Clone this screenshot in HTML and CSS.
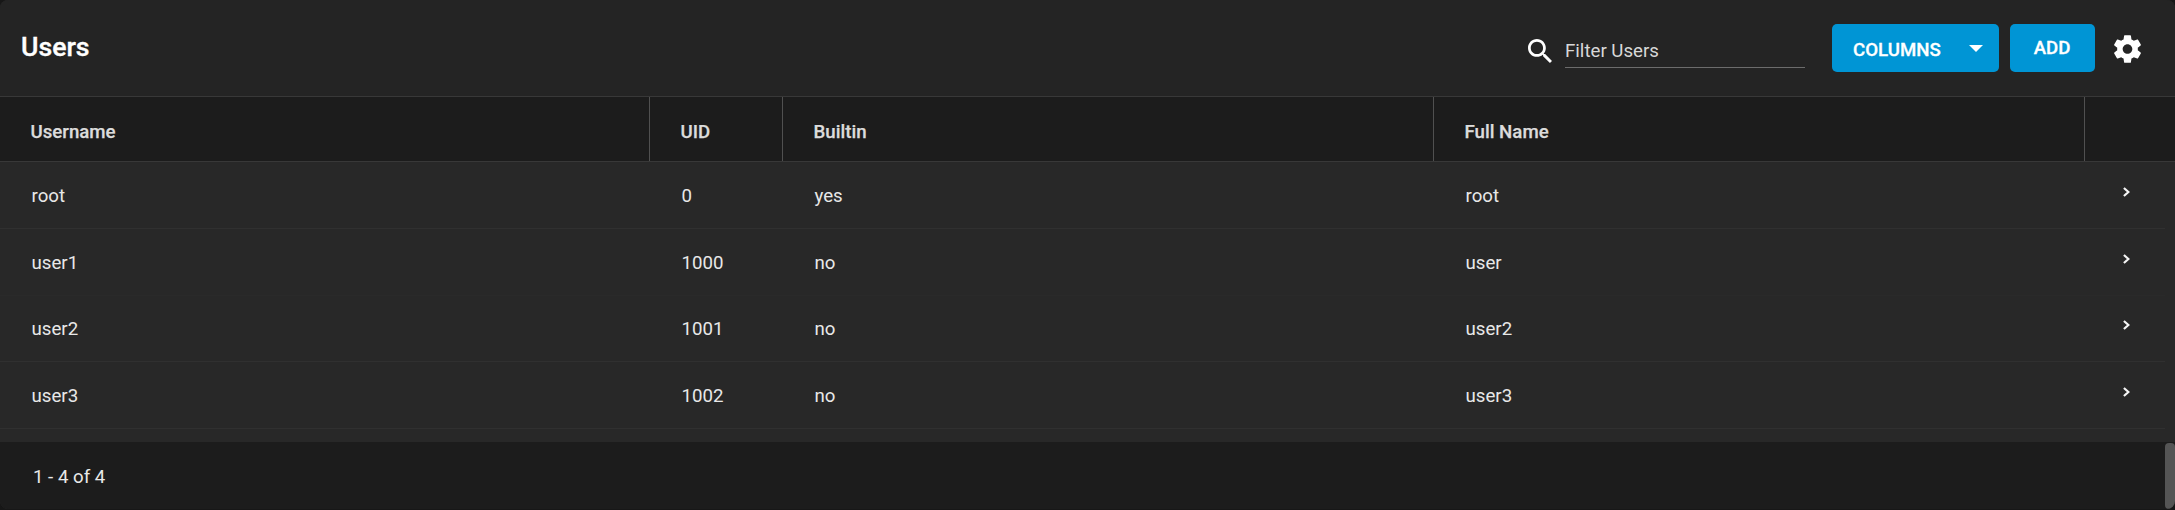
FILE: index.html
```html
<!DOCTYPE html>
<html lang="en">
<head>
<meta charset="utf-8">
<title>Users</title>
<link rel="stylesheet" href="styles.css">
</head>
<body>
<main class="card">
  <header class="toolbar">
    <h1 class="title">Users</h1>
    <div class="search">
      <svg class="search-icon" viewBox="3 3 17.5 17.5"><path d="M15.5 14h-.79l-.28-.27C15.41 12.59 16 11.11 16 9.5 16 5.91 13.09 3 9.5 3S3 5.91 3 9.5 5.91 16 9.5 16c1.61 0 3.09-.59 4.23-1.57l.27.28v.79l5 4.99L20.49 19l-4.99-5zm-6 0C7.01 14 5 11.99 5 9.5S7.01 5 9.5 5 14 7.01 14 9.5 11.99 14 9.5 14z"/></svg>
      <div class="field"><span>Filter Users</span></div>
    </div>
    <button class="btn btn-columns"><span>COLUMNS</span><svg class="caret" viewBox="0 0 14 7"><path d="M0 0h14L7 7z"/></svg></button>
    <button class="btn btn-add"><span>ADD</span></button>
    <svg class="gear" viewBox="2.2 2 19.6 20"><path d="M19.43 12.98c.04-.32.07-.64.07-.98s-.03-.66-.07-.98l2.11-1.65c.19-.15.24-.42.12-.64l-2-3.46c-.12-.22-.39-.3-.61-.22l-2.49 1c-.52-.4-1.08-.73-1.69-.98l-.38-2.65C14.46 2.18 14.25 2 14 2h-4c-.25 0-.46.18-.49.42l-.38 2.65c-.61.25-1.17.59-1.69.98l-2.49-1c-.23-.09-.49 0-.61.22l-2 3.46c-.13.22-.07.49.12.64l2.11 1.65c-.04.32-.07.65-.07.98s.03.66.07.98l-2.11 1.65c-.19.15-.24.42-.12.64l2 3.46c.12.22.39.3.61.22l2.49-1c.52.4 1.08.73 1.69.98l.38 2.65c.03.24.24.42.49.42h4c.25 0 .46-.18.49-.42l.38-2.65c.61-.25 1.17-.59 1.69-.98l2.49 1c.23.09.49 0 .61-.22l2-3.46c.12-.22.07-.49-.12-.64l-2.11-1.65zM12 15.5c-1.93 0-3.5-1.57-3.5-3.5s1.57-3.5 3.5-3.5 3.5 1.57 3.5 3.5-1.57 3.5-3.5 3.5z"/></svg>
  </header>
  <div class="grid head">
    <div>Username</div><div>UID</div><div>Builtin</div><div>Full Name</div><div></div>
  </div>
  <div class="body">
    <div class="grid row"><div>root</div><div>0</div><div>yes</div><div>root</div><div><svg class="chevron" viewBox="0 0 7 10"><path d="M.9 1L5.4 5 .9 9"/></svg></div></div>
    <div class="grid row faint"><div>user1</div><div>1000</div><div>no</div><div>user</div><div><svg class="chevron" viewBox="0 0 7 10"><path d="M.9 1L5.4 5 .9 9"/></svg></div></div>
    <div class="grid row short"><div>user2</div><div>1001</div><div>no</div><div>user2</div><div><svg class="chevron" viewBox="0 0 7 10"><path d="M.9 1L5.4 5 .9 9"/></svg></div></div>
    <div class="grid row"><div>user3</div><div>1002</div><div>no</div><div>user3</div><div><svg class="chevron" viewBox="0 0 7 10"><path d="M.9 1L5.4 5 .9 9"/></svg></div></div>
  </div>
  <footer class="footer"><span>1 - 4 of 4</span><div class="thumb"></div></footer>
</main>
</body>
</html>
```
FILE: styles.css
```css
* { box-sizing: border-box; }
body {
  margin: 0;
  height: 510px;
  overflow: hidden;
  background: #171717;
  color: #e8e8e8;
  font: 18.667px/24px Roboto, sans-serif;
}
.card {
  height: 509px;
  background: #282828;
  border-radius: 8px;
  overflow: hidden;
}
.toolbar {
  display: flex;
  align-items: flex-start;
  height: 97px;
  padding: 24px 34px 0 21px;
  background: #242424;
  border-bottom: 1px solid #383838;
}
.title {
  flex: 1;
  margin: 6px 0 0;
  color: #fff;
  font-size: 26.667px;
  line-height: 34px;
  font-weight: 500;
  -webkit-text-stroke: 0.35px currentColor;
}
.search { display: flex; margin-right: 27px; }
.search-icon { width: 24px; height: 24px; margin: 15px 13px 0 0; fill: #fff; }
.field {
  width: 240px;
  height: 44px;
  padding-top: 15px;
  border-bottom: 1px solid #6c6c6c;
  color: #d8d8d8;
}
.btn {
  display: flex;
  align-items: center;
  height: 48px;
  padding: 0;
  border: 0;
  border-radius: 5px;
  background: #0095d5;
  color: #fff;
  font: 500 18.667px/24px Roboto, sans-serif;
  -webkit-text-stroke: 0.3px currentColor;
}
.btn-columns {
  justify-content: space-between;
  width: 167px;
  margin-right: 11px;
  padding: 3px 16px 0 21px;
}
.caret { width: 14px; height: 7px; margin-top: -3px; fill: #fff; }
.btn-add { justify-content: center; width: 85px; margin-right: 19px; padding: 0 1px 1px 0; }
.gear { width: 27px; height: 28px; margin-top: 11px; fill: #fff; }
.grid { display: grid; grid-template-columns: 650px 133px 651px 651px 1fr; }
.head {
  height: 65px;
  background: #1c1c1c;
  border-bottom: 1px solid #383838;
  color: #dcdcdc;
  font-weight: 500;
  -webkit-text-stroke: 0.25px currentColor;
}
.head > div { padding: 23px 0 0 30.5px; border-right: 1px solid #505050; }
.head > div:last-child { border-right: 0; }
.body { height: 280px; padding-right: 10px; }
.row { height: 67px; border-bottom: 1px solid #303030; }
.row.short { height: 66px; }
.row.faint { border-bottom-color: #2a2a2a; }
.row > div { padding: 22px 0 0 31.5px; }
.row.short > div { padding-top: 21px; }
.row > div:last-child { padding-left: 38px; }
.chevron {
  display: block;
  width: 7px;
  height: 10px;
  margin-top: 3px;
  fill: none;
  stroke: #f4f4f4;
  stroke-width: 2.2;
}
.footer {
  display: flex;
  justify-content: space-between;
  height: 67px;
  padding: 1px 0 0 33px;
  background: #1c1c1c;
}
.footer span { margin-top: 22px; }
.thumb { width: 10px; height: 66px; border-radius: 4px; background: #555; }
```
